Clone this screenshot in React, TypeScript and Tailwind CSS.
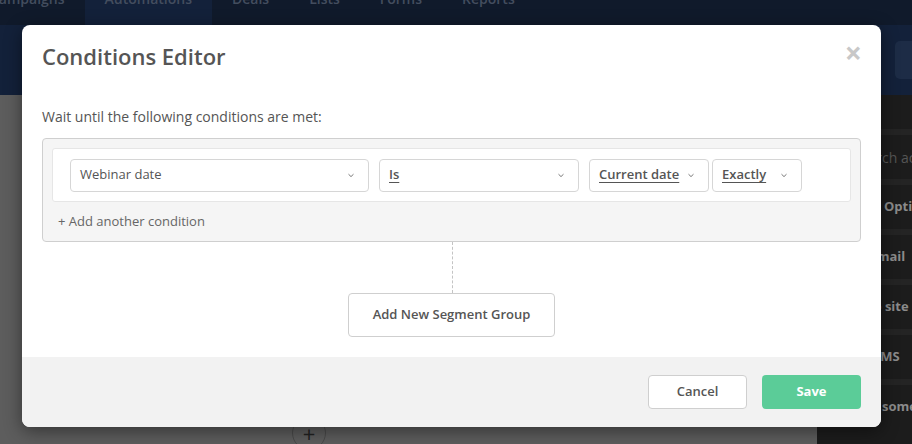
import React from 'react'

const navItems = [
  { label: 'Campaigns', active: false },
  { label: 'Automations', active: true },
  { label: 'Deals', active: false },
  { label: 'Lists', active: false },
  { label: 'Forms', active: false },
  { label: 'Reports', active: false },
]

const sidebarItems = [
  { label: 'Search actions', pl: 'pl-[36px]', search: true },
  { label: 'Options', pl: 'pl-[67px]' },
  { label: 'Send email', pl: 'pl-[17px]' },
  { label: 'Go to site rules', pl: 'pl-[30px]' },
  { label: 'Send SMS', pl: 'pl-[21px]' },
  { label: 'Do something', pl: 'pl-[44px]' },
]

function Chevron() {
  return (
    <svg width="8" height="5" viewBox="0 0 8 5" fill="none" className="shrink-0">
      <path d="M1.5 1.2 L4 3.6 L6.5 1.2" stroke="#777" strokeWidth="1" />
    </svg>
  )
}

function Select({ label, width, underline }: { label: string; width: string; underline?: boolean }) {
  return (
    <div
      className={`${width} h-[33px] flex items-center justify-between px-[9px] border border-[#d6d6d6] rounded-[4px] bg-white text-[13px] text-[#555]`}
    >
      <span className={underline ? 'underline underline-offset-[3px] font-semibold' : ''}>{label}</span>
      <span className="pr-[4px]">
        <Chevron />
      </span>
    </div>
  )
}

export default function App() {
  return (
    <div className="relative w-[912px] h-[444px] overflow-hidden bg-[#5d5d5d]" style={{ fontFamily: '"Open Sans", "Liberation Sans", sans-serif' }}>
      {/* dimmed app behind the modal */}
      <div className="h-[25px] bg-[#101a2b] flex items-start overflow-hidden text-[14px] font-semibold text-[#434d5e]">
        {navItems.map((item) => (
          <div
            key={item.label}
            className={`h-[25px] flex items-start px-[20px] ${item.active ? 'bg-[#13213a]' : ''} ${item.label === 'Campaigns' ? '-ml-[30px]' : ''}`}
          >
            <span className="-mt-[11px] leading-[20px]">{item.label}</span>
          </div>
        ))}
      </div>
      <div className="h-[70px] bg-[#13213a] flex items-center justify-end">
        <div className="w-[17px] h-[38px] rounded-l-[5px] bg-[#1d2c46]" />
      </div>
      <div className="flex h-[349px]">
        <div className="flex-1 relative">
          <div className="absolute left-[292px] top-[321px] w-[34px] h-[34px] rounded-full border border-[#4a4a4a] flex items-center justify-center text-[#222] text-[22px] leading-none">
            +
          </div>
        </div>
        <div className="w-[95px] bg-[#1c1c1c] flex flex-col text-[13px] font-bold text-[#8b8b8b] pt-[34px]">
          {sidebarItems.map((s) => (
            <div
              key={s.label}
              className={`h-[50px] flex items-center whitespace-nowrap border-t-[6px] border-[#242424] ${s.pl} ${s.search ? 'font-normal text-[#555] text-[14px]' : ''}`}
            >
              {s.label}
            </div>
          ))}
        </div>
      </div>

      {/* modal */}
      <div className="absolute left-[22px] top-[25px] w-[859px] h-[402px] bg-white rounded-[8px] shadow-[0_4px_18px_rgba(0,0,0,0.45)] flex flex-col overflow-hidden">
        <div className="flex items-start justify-between pl-[20px] pr-[19px] pt-[16px]">
          <h1 className="text-[22px] font-semibold text-[#555] leading-[30px]">Conditions Editor</h1>
          <span className="text-[30px] leading-[24px] text-[#c8c8c8] font-bold">×</span>
        </div>
        <div className="flex-1 px-[20px] pt-[42px]">
          <p className="text-[14px] text-[#555] leading-[20px] -mt-[6px]">Wait until the following conditions are met:</p>
          <div className="mt-[11px] bg-[#f5f5f5] border border-[#cfcfcf] rounded-[4px] p-[9px] pb-0 h-[104px]">
            <div className="bg-white border border-[#e6e6e6] rounded-[3px] h-[54px] flex items-center pl-[17px] gap-[10px]">
              <Select label="Webinar date" width="w-[299px]" />
              <Select label="Is" width="w-[200px]" underline />
              <div className="flex gap-[3px]">
                <Select label="Current date" width="w-[120px]" underline />
                <Select label="Exactly" width="w-[90px]" underline />
              </div>
            </div>
            <div className="text-[13px] text-[#666] pl-[6px] mt-[10px] leading-[18px]">+ Add another condition</div>
          </div>
          <div className="flex flex-col items-center">
            <div className="h-[51px] border-l border-dashed border-[#c4c4c4] ml-[1px]" />
            <button className="w-[207px] h-[44px] border border-[#cfcfcf] rounded-[4px] bg-white text-[13px] font-semibold text-[#555]">
              Add New Segment Group
            </button>
          </div>
        </div>
        <div className="h-[70px] bg-[#f2f2f2] flex items-center justify-end gap-[15px] pr-[20px]">
          <button className="w-[99px] h-[34px] border border-[#cfcfcf] rounded-[4px] bg-white text-[13px] font-semibold text-[#555]">
            Cancel
          </button>
          <button className="w-[99px] h-[34px] rounded-[4px] bg-[#5bcc98] text-[13px] font-bold text-white">Save</button>
        </div>
      </div>
    </div>
  )
}
